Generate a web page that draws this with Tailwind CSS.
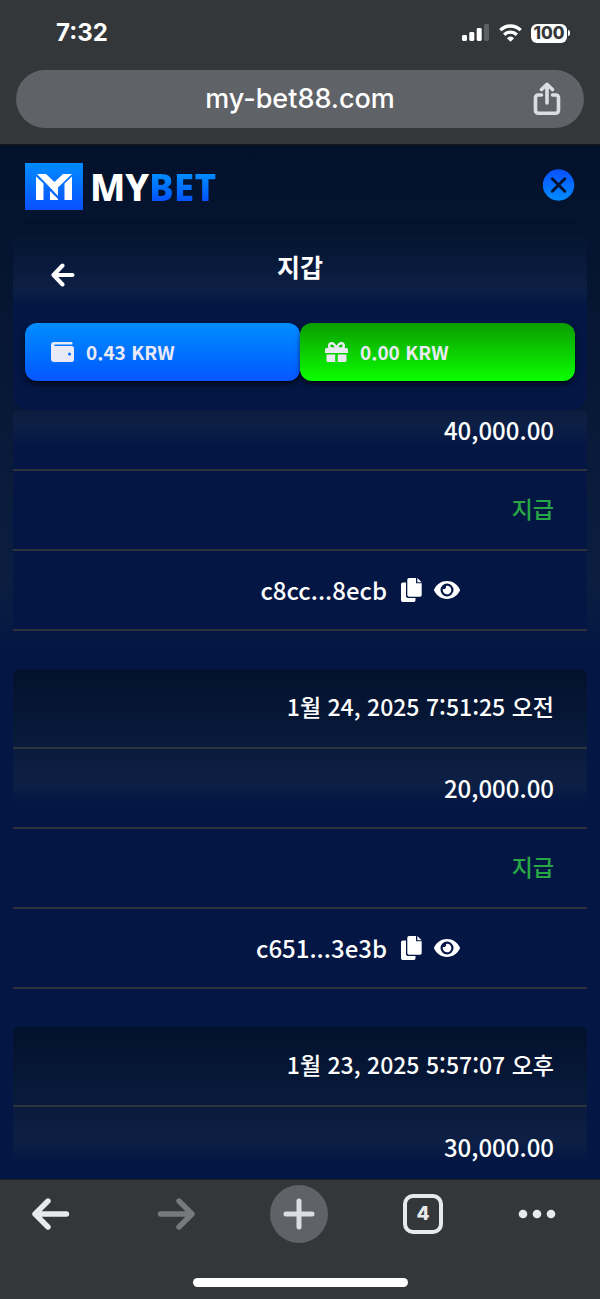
<!DOCTYPE html>
<html lang="ko">
<head>
<meta charset="utf-8">
<meta name="viewport" content="width=device-width, initial-scale=1">
<title>지갑</title>
<script src="https://cdn.jsdelivr.net/npm/@tailwindcss/browser@4"></script>
</head>
<body class="min-h-screen flex flex-col bg-[#041644] text-white font-['Noto_Sans_CJK_KR',sans-serif]">

<!-- Status bar and address bar -->
<header class="bg-[#343739] font-[Inter,sans-serif] border-b border-black/60">
  <div class="h-[70px] pl-14 pr-[30px] pb-1 flex items-center justify-between">
    <span class="text-[24px] leading-8 font-bold">7:32</span>
    <div class="flex items-center gap-[9px]">
      <svg class="w-[28px] h-[18px]" viewBox="0 0 28 18" fill="#fff" aria-hidden="true">
        <rect x="0" y="11" width="5" height="6" rx="1.4"/><rect x="7.300" y="8" width="5" height="9" rx="1.4"/><rect x="14.700" y="4" width="5" height="13" rx="1.4"/><rect x="22" y="0" width="5" height="17" rx="1.4" fill="#5d6062"/>
      </svg>
      <svg class="w-[23px] h-[18px]" viewBox="0 0 23 18" fill="none" stroke="#fff" stroke-width="3.300" aria-hidden="true">
        <path d="M1.300 6.200a14.500 14.500 0 0 1 20.400 0"/><path d="M5.200 10.700a9 9 0 0 1 12.600 0"/><path d="M11.500 17.800l-3.600-3.600a4.900 4.900 0 0 1 7.200 0z" fill="#fff" stroke="none"/>
      </svg>
      <div class="flex items-center gap-px">
        <span class="w-9 h-[19px] rounded-md bg-white text-[#343739] text-[17px] leading-[19px] font-extrabold flex items-center justify-center">100</span>
        <span class="w-[2px] h-[6px] rounded-r bg-white"></span>
      </div>
    </div>
  </div>
  <div class="mx-4 mb-4 h-[58px] rounded-full bg-[#5f6367] grid grid-cols-[56px_1fr_56px] items-center">
    <span></span>
    <span class="text-center text-[27px] leading-8 font-medium">my-bet88.com</span>
    <button type="button" aria-label="공유" class="justify-self-start ml-[5px]">
      <svg class="w-[28px] h-[34px]" viewBox="0 0 28 34" fill="none" stroke="#dcdde2" stroke-width="3.600" stroke-linecap="round" stroke-linejoin="round" aria-hidden="true">
        <path d="M8.500 13H5a2.500 2.500 0 0 0-2.500 2.500v13A3 3 0 0 0 5.500 31.300h17a3 3 0 0 0 3-2.800v-13A2.500 2.500 0 0 0 23 13h-3.500M14 21V3M8.500 7.500L14 2.300l5.500 5.200"/>
      </svg>
    </button>
  </div>
</header>

<main class="flex-1 flex flex-col px-[13px] bg-linear-to-b from-[#03112b] from-0% via-[#0c1e40] via-42% to-[#041644] to-49%">

  <div class="h-[75px] pt-[18px] px-3 flex items-start justify-between">
    <a href="#" class="flex items-center gap-[7px]" aria-label="MYBET">
      <svg class="w-[58px] h-[47px]" viewBox="0 0 58 47" aria-hidden="true">
        <defs><linearGradient id="brand" x1="0" y1="0" x2="0" y2="1"><stop offset="0" stop-color="#008cff"/><stop offset="1" stop-color="#0a50ff"/></linearGradient></defs>
        <path fill="url(#brand)" d="M0 0h58v47H0z"/>
        <path fill="#fff" d="M12 11h9l8.500 8 8.500-8h9L33 24.500V33L25.500 25z"/>
        <path fill="#fff" d="M11 13.500l7.500 7V37H11zM47 13.500l-7.500 7V37H47zM25 28l8 8v1h-8z"/>
      </svg>
      <span class="text-[37px] leading-[47px] font-extrabold font-['Noto_Sans',sans-serif]">MY<span class="bg-linear-to-b from-[#008cff] from-25% to-[#0a50ff] to-80% bg-clip-text text-transparent">BET</span></span>
    </a>
    <button type="button" aria-label="닫기" class="mt-[6px]">
      <svg class="w-[32px] h-[32px]" viewBox="0 0 32 32" aria-hidden="true">
        <defs><linearGradient id="close" x1="0" y1="1" x2="0" y2="0"><stop offset="0" stop-color="#008cff"/><stop offset="1" stop-color="#0a50ff"/></linearGradient></defs>
        <circle cx="15.500" cy="16" r="15.700" fill="url(#close)"/>
        <path d="M9.300 9.800l12.500 12.500M21.800 9.800L9.300 22.300" stroke="#04122e" stroke-width="2.900" stroke-linecap="round"/>
      </svg>
    </button>
  </div>

  <!-- Wallet title and balances -->
  <section class="h-[191px] px-3 rounded-2xl bg-linear-to-b from-[#03122c] from-0% via-[#0d1f44] via-37% to-[#041644] to-44%">
    <div class="h-[103px] grid grid-cols-[100px_1fr_100px]">
      <button type="button" aria-label="뒤로" class="justify-self-start self-start ml-[26px] mt-[43px]">
        <svg class="w-[24px] h-[24px]" viewBox="0 0 24 24" fill="none" stroke="#fff" stroke-width="4" stroke-linecap="round" stroke-linejoin="round" aria-hidden="true"><path d="M11.500 2.500L2.500 12l9 9.500M3 12h18.500"/></svg>
      </button>
      <h1 class="text-center text-[25px] leading-9 font-bold pt-7">지갑</h1>
    </div>
    <div class="grid grid-cols-2 h-[58px] text-[19px] leading-7 font-bold text-[#e9eaf5]">
      <button type="button" class="rounded-xl bg-linear-to-b from-[#008cff] to-[#0a55ff] shadow-md shadow-black/60 flex items-center gap-3 pl-[26px]">
        <svg class="w-[23px] h-[20px]" viewBox="0 0 23 20" fill="currentColor" aria-hidden="true"><path fill-rule="evenodd" d="M3 0h17.500Q21.500 0 21.500 1.300T20.500 2.600H4Q3.200 2.600 3.200 3.300T4 4h16.500A2.500 2.500 0 0 1 23 6.500v11A2.500 2.500 0 0 1 20.500 20H3A3 3 0 0 1 0 17V3A3 3 0 0 1 3 0zM18.500 10.500a1.500 1.500 0 1 0 0 3 1.500 1.500 0 0 0 0-3z"/></svg>
        <span>0.43 KRW</span>
      </button>
      <button type="button" class="rounded-xl bg-linear-to-b from-[#0a9e00] to-[#0aff00] shadow-md shadow-black/60 flex items-center gap-3 pl-[25px]">
        <svg class="w-[23px] h-[20px]" viewBox="0 0 23 20" fill="currentColor" aria-hidden="true"><path d="M1.500 6h20A1.500 1.500 0 0 1 23 7.500V11H0V7.500A1.500 1.500 0 0 1 1.500 6zM1.500 12.500h8.700V20H3a1.500 1.500 0 0 1-1.500-1.500zM12.800 12.500h8.700v6A1.500 1.500 0 0 1 20 20h-7.200z"/><path d="M11.500 6.500C10 3 8.500 1.300 6.800 1.300a2.600 2.600 0 0 0 0 5.200zM11.500 6.500C13 3 14.500 1.300 16.200 1.300a2.600 2.600 0 0 1 0 5.200z" fill="none" stroke="currentColor" stroke-width="2.400"/></svg>
        <span>0.00 KRW</span>
      </button>
    </div>
  </section>

  <!-- Transactions -->
  <table class="w-full mb-[38px] text-right text-[24px] leading-8 font-medium border-separate border-spacing-0 bg-linear-to-b from-[#0c1d3e] from-0% via-[#0d1f44] via-6% to-[#041644] to-16%">
    <tbody>
      <tr><td class="h-[60px] pb-5 pr-[33px] border-b-2 border-[#2d323b]">40,000.00</td></tr>
      <tr><td class="h-20 pb-1 pr-[33px] border-b-2 border-[#2d323b] text-[23px] text-[#28a745]">지급</td></tr>
      <tr><td class="h-20 pr-[127px] border-b-2 border-[#2d323b]">
        <div class="flex items-center justify-end">
          <span>c8cc...8ecb</span>
          <button type="button" aria-label="복사" class="ml-[14px]"><svg class="w-[21px] h-[24px]" viewBox="0 0 21 24" fill="currentColor" aria-hidden="true"><path d="M8 0h7v5.300h5.700V17a1.700 1.700 0 0 1-1.700 1.700H8A1.700 1.700 0 0 1 6.300 17V1.700A1.700 1.700 0 0 1 8 0zM16.300 0l4.400 4.200h-4.400zM1.700 4.500H5v13.800A1.800 1.800 0 0 0 6.800 20H14.500v2.300A1.700 1.700 0 0 1 12.800 24H1.700A1.700 1.700 0 0 1 0 22.300V6.200A1.700 1.700 0 0 1 1.700 4.500z"/></svg></button>
          <button type="button" aria-label="보기" class="ml-3"><svg class="w-[26px] h-[18px]" viewBox="0 0 26 18" aria-hidden="true"><path fill="currentColor" fill-rule="evenodd" d="M13 0c5.700 0 10.200 3.200 12.800 8.200a1.700 1.700 0 0 1 0 1.600C23.200 14.800 18.700 18 13 18S2.800 14.800.2 9.800a1.700 1.700 0 0 1 0-1.600C2.800 3.200 7.300 0 13 0zM13 2.500a6.500 6.500 0 1 0 0 13 6.500 6.500 0 0 0 0-13z"/><path fill="currentColor" d="M13 4.700a4.300 4.300 0 1 1-4.100 3.100 2.200 2.200 0 0 0 3-2.900z"/></svg></button>
        </div></td></tr>
    </tbody>
  </table>

  <table class="w-full mb-[38px] text-right text-[24px] leading-8 font-medium rounded-md border-separate border-spacing-0 bg-linear-to-b from-[#03112c] from-0% via-[#0d1f44] via-36% to-[#041644] to-42%">
    <tbody>
      <tr><td class="h-20 pb-1 pr-[33px] border-b-2 border-[#2d323b] text-[23px]">1월 24, 2025 7:51:25 오전</td></tr>
      <tr><td class="h-20 pr-[33px] border-b-2 border-[#2d323b]">20,000.00</td></tr>
      <tr><td class="h-20 pb-1 pr-[33px] border-b-2 border-[#2d323b] text-[23px] text-[#28a745]">지급</td></tr>
      <tr><td class="h-20 pr-[127px] border-b-2 border-[#2d323b]">
        <div class="flex items-center justify-end">
          <span>c651...3e3b</span>
          <button type="button" aria-label="복사" class="ml-[14px]"><svg class="w-[21px] h-[24px]" viewBox="0 0 21 24" fill="currentColor" aria-hidden="true"><path d="M8 0h7v5.300h5.700V17a1.700 1.700 0 0 1-1.700 1.700H8A1.700 1.700 0 0 1 6.300 17V1.700A1.700 1.700 0 0 1 8 0zM16.300 0l4.400 4.200h-4.400zM1.700 4.500H5v13.800A1.800 1.800 0 0 0 6.800 20H14.500v2.300A1.700 1.700 0 0 1 12.800 24H1.700A1.700 1.700 0 0 1 0 22.300V6.200A1.700 1.700 0 0 1 1.700 4.500z"/></svg></button>
          <button type="button" aria-label="보기" class="ml-3"><svg class="w-[26px] h-[18px]" viewBox="0 0 26 18" aria-hidden="true"><path fill="currentColor" fill-rule="evenodd" d="M13 0c5.700 0 10.200 3.200 12.800 8.200a1.700 1.700 0 0 1 0 1.600C23.200 14.800 18.700 18 13 18S2.800 14.800.2 9.800a1.700 1.700 0 0 1 0-1.600C2.800 3.200 7.300 0 13 0zM13 2.500a6.500 6.500 0 1 0 0 13 6.500 6.500 0 0 0 0-13z"/><path fill="currentColor" d="M13 4.700a4.300 4.300 0 1 1-4.100 3.100 2.200 2.200 0 0 0 3-2.900z"/></svg></button>
        </div></td></tr>
    </tbody>
  </table>

  <table class="w-full text-right text-[24px] leading-8 font-medium rounded-t-md border-separate border-spacing-0 bg-linear-to-b from-[#03112c] from-0% via-[#0d1f44] via-76% to-[#041644] to-88%">
    <tbody>
      <tr><td class="h-20 pb-1 pr-[33px] border-b-2 border-[#2d323b] text-[23px]">1월 23, 2025 5:57:07 오후</td></tr>
      <tr><td class="h-[72px] pt-2 pr-[33px]">30,000.00</td></tr>
    </tbody>
  </table>
</main>

<!-- Browser toolbar -->
<footer class="h-[120px] bg-[#343739] border-t border-black/40 font-[Inter,sans-serif] text-[#e8e9ed] flex flex-col items-center justify-between pb-3">
  <nav class="w-full pl-8 pr-11 pt-[5px] flex items-center justify-between">
    <button type="button" aria-label="이전"><svg class="w-[38px] h-[32px]" viewBox="0 0 38 32" fill="none" stroke="currentColor" stroke-width="5.400" stroke-linecap="round" stroke-linejoin="round" aria-hidden="true"><path d="M16 3L3 16l13 13M4 16h30.500"/></svg></button>
    <button type="button" aria-label="다음" class="text-[#77797b] ml-3"><svg class="w-[38px] h-[32px]" viewBox="0 0 38 32" fill="none" stroke="currentColor" stroke-width="5.400" stroke-linecap="round" stroke-linejoin="round" aria-hidden="true"><path d="M22 3l13 13-13 13M34 16H3.500"/></svg></button>
    <button type="button" aria-label="새 탭" class="size-[58px] rounded-full bg-[#5f6367] flex items-center justify-center"><svg class="w-[32px] h-[32px]" viewBox="0 0 32 32" fill="none" stroke="#dcdde2" stroke-width="5" stroke-linecap="round" aria-hidden="true"><path d="M16 3v26M3 16h26"/></svg></button>
    <button type="button" aria-label="탭 4개" class="size-10 rounded-[10px] border-4 border-current text-[19px] leading-6 font-extrabold flex items-center justify-center">4</button>
    <button type="button" aria-label="메뉴"><svg class="w-[38px] h-[10px]" viewBox="0 0 38 10" fill="currentColor" aria-hidden="true"><circle cx="5" cy="5" r="4.300"/><circle cx="19" cy="5" r="4.300"/><circle cx="33" cy="5" r="4.300"/></svg></button>
  </nav>
  <div class="w-[215px] h-[9px] rounded-full bg-white"></div>
</footer>

</body>
</html>
